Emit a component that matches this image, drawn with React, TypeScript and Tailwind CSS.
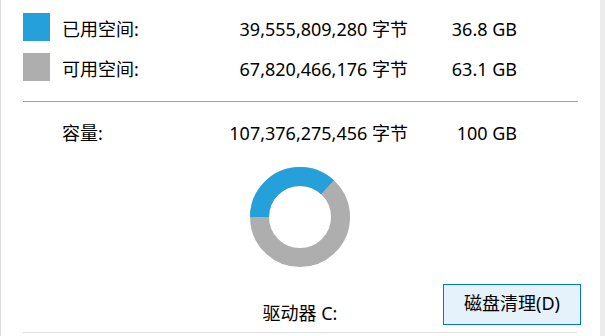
import React from 'react'

const font = { fontFamily: '"Noto Sans", "Noto Sans CJK SC", sans-serif' }

function Donut({ used }: { used: number }) {
  const r = 40.5
  const c = 2 * Math.PI * r
  return (
    <svg width="100" height="100" viewBox="0 0 100 100">
      <circle cx="50" cy="50" r={r} fill="none" stroke="#aeaeae" strokeWidth="19" />
      <circle
        cx="50"
        cy="50"
        r={r}
        fill="none"
        stroke="#26a0da"
        strokeWidth="19"
        strokeDasharray={`${c * used} ${c}`}
        transform="rotate(180 50 50)"
      />
    </svg>
  )
}

export default function App() {
  return (
    <div className="w-[605px] h-[336px] bg-white flex text-[18px] text-black leading-[24px]" style={font}>
      <div className="w-px bg-[#dadada]" />

      <div className="flex-1 flex flex-col pl-[22px] pt-[7px]">
        {/* Used / free */}
        <div className="grid grid-cols-[39px_150px_196px_109px] h-[40px] items-center">
          <div className="w-[27px] h-[28px] bg-[#26a0da]" />
          <div className="pt-[3px]">已用空间:</div>
          <div className="pt-[3px] text-right">39,555,809,280 字节</div>
          <div className="pt-[3px] text-right">36.8 GB</div>
        </div>
        <div className="grid grid-cols-[39px_150px_196px_109px] h-[40px] items-center">
          <div className="w-[27px] h-[28px] bg-[#aeaeae]" />
          <div className="pt-[3px]">可用空间:</div>
          <div className="pt-[3px] text-right">67,820,466,176 字节</div>
          <div className="pt-[3px] text-right">63.1 GB</div>
        </div>

        <div className="mt-[14px] h-px w-[555px] bg-[#a0a0a0]" />

        {/* Capacity */}
        <div className="mt-[11px] grid grid-cols-[39px_150px_196px_109px] h-[40px] items-center">
          <div />
          <div>容量:</div>
          <div className="text-right">107,376,275,456 字节</div>
          <div className="text-right">100 GB</div>
        </div>

        {/* Chart + drive + cleanup */}
        <div className="mt-[14px] flex items-end">
          <div className="ml-[207px] w-[140px] flex flex-col items-center">
            <Donut used={0.368} />
            <div className="mt-[34px]">驱动器 C:</div>
          </div>
          <button className="ml-[73px] w-[138px] h-[41px] border border-[#0078d7] bg-[#e5f1fb] flex items-center justify-center pb-[3px]">
            磁盘清理(D)
          </button>
        </div>

        <div className="mt-[7px] h-px w-[554px] bg-[#e3e3e3]" />
      </div>

      <div className="w-[5px] bg-[#ececec]" />
    </div>
  )
}
